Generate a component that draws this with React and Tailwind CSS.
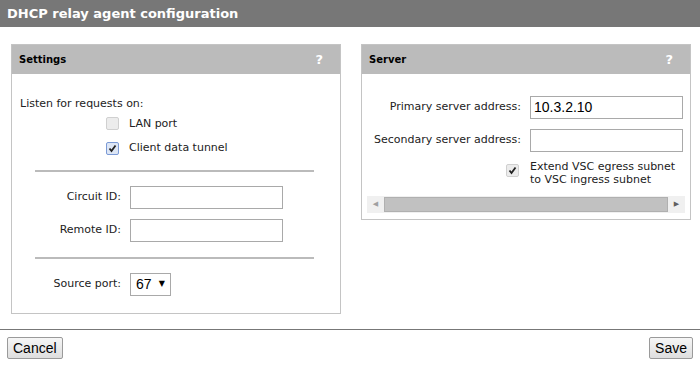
import React from "react";

const font = { fontFamily: "Verdana, 'DejaVu Sans', sans-serif" };

function Panel({ title, children, className }) {
  return (
    <div className={"border border-[#c4c4c4] bg-white " + className}>
      <div className="h-[29px] bg-[#bbbbbb] flex items-center justify-between pl-[7px] pr-[17px]">
        <span className="text-[10px] font-bold text-black">{title}</span>
        <span className="text-[13px] font-bold text-white">?</span>
      </div>
      {children}
    </div>
  );
}

function Box({ checked, disabled }) {
  return (
    <span
      className={
        "w-[13px] h-[13px] rounded-[2px] border flex items-center justify-center " +
        (disabled
          ? "border-[#d0d0d0] bg-[#ececec]"
          : checked
          ? "border-[#7b9ad6] bg-[#dde6f5]"
          : "border-[#a0a0a0] bg-white")
      }
    >
      {checked && (
        <svg width="9" height="9" viewBox="0 0 9 9">
          <path d="M1.5 4.5 L3.5 7 L7.5 1.5" stroke="#222" strokeWidth="1.8" fill="none" />
        </svg>
      )}
    </span>
  );
}

function Field({ label, value, labelW }) {
  return (
    <div className="flex items-center">
      <span className={"text-[11px] text-[#222] text-right pr-[9px] " + labelW}>{label}</span>
      <div className="w-[153px] h-[23px] border border-[#a9a9a9] bg-white flex items-center px-[3px] text-[14px] text-black" style={{ fontFamily: "'Liberation Sans', Arial, sans-serif" }}>
        {value}
      </div>
    </div>
  );
}

export default function App() {
  return (
    <div className="w-[700px] h-[367px] bg-white flex flex-col" style={font}>
      <div className="h-[27px] bg-[#777777] flex items-center pl-[7px]">
        <span className="text-[13px] font-bold text-white">DHCP relay agent configuration</span>
      </div>
      <div className="flex items-start gap-[20px] pl-[11px] pt-[17px] h-[286px]">
        <Panel title="Settings" className="w-[330px] h-[270px]">
          <div className="pl-[8px] pt-[22px] text-[11px] text-[#222]">Listen for requests on:</div>
          <div className="pl-[94px] pt-[3px] flex flex-col gap-[8px]">
            <div className="flex items-center gap-[10px]">
              <Box disabled />
              <span className="text-[11px] text-[#222]">LAN port</span>
            </div>
            <div className="flex items-center gap-[10px]">
              <Box checked />
              <span className="text-[11px] text-[#222]">Client data tunnel</span>
            </div>
          </div>
          <div className="ml-[23px] mr-[26px] mt-[13px] h-[2px] bg-[#bbbbbb]" />
          <div className="pt-[14px] flex flex-col gap-[10px]">
            <Field label="Circuit ID:" labelW="w-[118px]" />
            <Field label="Remote ID:" labelW="w-[118px]" />
          </div>
          <div className="ml-[23px] mr-[26px] mt-[15px] h-[2px] bg-[#bbbbbb]" />
          <div className="flex items-center pt-[14px]">
            <span className="w-[118px] text-right pr-[9px] text-[11px] text-[#222]">Source port:</span>
            <div className="w-[41px] h-[23px] border border-[#a9a9a9] bg-white flex items-center justify-between pl-[5px] pr-[5px]">
              <span className="text-[14px] text-black" style={{ fontFamily: "'Liberation Sans', Arial, sans-serif" }}>67</span>
              <span className="text-[8px] text-black">▼</span>
            </div>
          </div>
        </Panel>
        <Panel title="Server" className="w-[330px] h-[176px]">
          <div className="pt-[22px] flex flex-col gap-[10px]">
            <Field label="Primary server address:" value="10.3.2.10" labelW="w-[168px]" />
            <Field label="Secondary server address:" labelW="w-[168px]" />
          </div>
          <div className="flex items-start pt-[8px] pl-[144px]">
            <div className="pt-[4px]"><Box checked disabled /></div>
            <span className="pl-[11px] text-[11px] text-[#222] leading-[13px]">
              Extend VSC egress subnet
              <br />
              to VSC ingress subnet
            </span>
          </div>
          <div className="mx-[5px] mt-[10px] h-[17px] bg-[#f0f0f0] flex items-center">
            <span className="w-[17px] flex justify-center text-[7px] text-[#a0a0a0]">◀</span>
            <div className="flex-1 h-[15px] bg-[#c1c1c1] border border-[#b0b0b0]" />
            <span className="w-[17px] flex justify-center text-[7px] text-[#606060]">▶</span>
          </div>
        </Panel>
      </div>
      <div className="h-[1px] bg-[#777777] mt-[16px]" />
      <div className="flex justify-between px-[7px] pt-[7px]" style={{ fontFamily: "'Liberation Sans', Arial, sans-serif" }}>
        <button className="h-[22px] px-[5px] text-[14px] border border-[#9a9a9a] rounded-[2px] bg-gradient-to-b from-[#f6f6f6] to-[#dedede] text-black">Cancel</button>
        <button className="h-[22px] px-[5px] text-[14px] border border-[#9a9a9a] rounded-[2px] bg-gradient-to-b from-[#f6f6f6] to-[#dedede] text-black">Save</button>
      </div>
    </div>
  );
}
